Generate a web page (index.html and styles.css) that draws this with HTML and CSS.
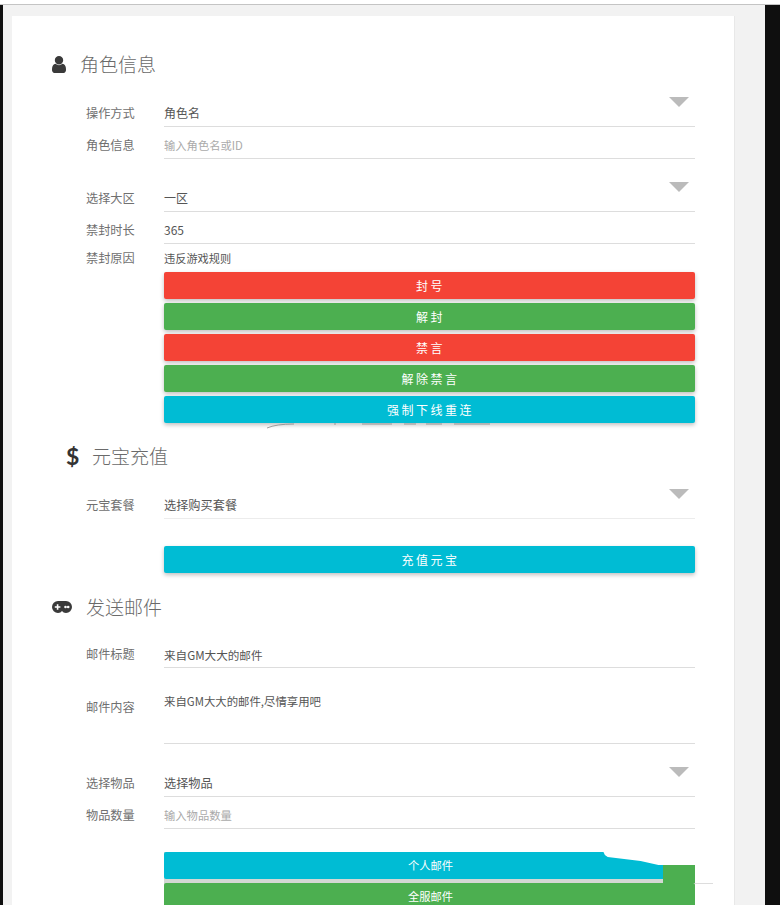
FILE: index.html
```html
<!DOCTYPE html>
<html lang="zh-CN">
<head>
<meta charset="utf-8">
<title>GM</title>
<link rel="stylesheet" href="styles.css">
</head>
<body>
<div class="frame">
  <div class="side side-left"></div>
  <main class="stage">
    <div class="card">
      <h2 class="heading heading-user">
        <svg class="icon-user" viewBox="256 128 1280 1536"><path d="M1536 1399q0 109-62.5 187t-150.5 78h-854q-88 0-150.5-78t-62.5-187q0-85 8.5-160.5t31.5-152 58.5-131 94-89 134.5-34.5q131 128 313 128t313-128q76 0 134.5 34.5t94 89 58.5 131 31.5 152 8.5 160.5zm-256-887q0 159-112.5 271.5t-271.5 112.5-271.5-112.5-112.5-271.5 112.5-271.5 271.5-112.5 271.5 112.5 112.5 271.5z" fill="#3a3a3a"/></svg>
        <span>角色信息</span>
      </h2>
      <div class="row"><label class="label">操作方式</label><div class="field select">角色名<i class="caret"></i></div></div>
      <div class="row"><label class="label">角色信息</label><div class="field hint">输入角色名或ID</div></div>
      <div class="row row-gap"><label class="label">选择大区</label><div class="field select">一区<i class="caret"></i></div></div>
      <div class="row"><label class="label">禁封时长</label><div class="field">365</div></div>
      <div class="row row-plain"><label class="label">禁封原因</label><div class="field narrow">违反游戏规则</div></div>
      <div class="actions">
        <button class="btn red">封号</button>
        <button class="btn green">解封</button>
        <button class="btn red">禁言</button>
        <button class="btn green">解除禁言</button>
        <button class="btn cyan">强制下线重连</button>
        <svg class="scratch" viewBox="0 0 340 6"><path d="M103 5Q112 1 130 1M170 1h2M198 1h30M240 1h12M262 1h16M290 1h36" fill="none" stroke="#888" stroke-width=".8"/></svg>
      </div>

      <h2 class="heading heading-money">
        <span class="dollar">$</span>
        <span>元宝充值</span>
      </h2>
      <div class="row row-tight"><label class="label">元宝套餐</label><div class="field select soft wide">选择购买套餐<i class="caret"></i></div></div>
      <div class="actions actions-solo">
        <button class="btn cyan">充值元宝</button>
      </div>

      <h2 class="heading heading-mail">
        <svg class="icon-pad" viewBox="0 0 20 12"><path d="M6 0h8a6 6 0 0 1 0 12c-2 0-3-1-4-2-1 1-2 2-4 2A6 6 0 0 1 6 0z" fill="#3a3a3a"/><path d="M4.800 3.200h1.600v2h2v1.600h-2v2H4.800v-2h-2V5.200h2z" fill="#fff"/><circle cx="13.500" cy="6" r="1.300" fill="#fff"/><circle cx="16.200" cy="6" r="1.300" fill="#fff"/></svg>
        <span>发送邮件</span>
      </h2>
      <div class="row row-tight"><label class="label">邮件标题</label><div class="field mail-title">来自GM大大的邮件</div></div>
      <div class="row row-area"><label class="label">邮件内容</label><div class="field area">来自GM大大的邮件,尽情享用吧</div></div>
      <div class="row row-gap"><label class="label">选择物品</label><div class="field select wide">选择物品<i class="caret"></i></div></div>
      <div class="row"><label class="label">物品数量</label><div class="field hint">输入物品数量</div></div>
      <div class="actions actions-mail">
        <button class="btn cyan btn-torn">个人邮件</button>
        <button class="btn green btn-small">全服邮件</button>
      </div>
    </div>
  </main>
  <div class="side side-right"></div>
</div>
</body>
</html>
```
FILE: styles.css
```css
* { box-sizing: border-box; }
html, body { margin: 0; padding: 0; background: #fff; }
body {
  height: 911px;
  overflow: hidden;
  font-family: "Noto Sans CJK SC", "Open Sans", sans-serif;
  font-size: 12px;
  color: #555;
  padding-top: 4px;
}
.frame {
  display: flex;
  height: 901px;
  overflow: hidden;
  border-top: 1px solid #c4c4c4;
  background: #f2f2f2;
}
.side { flex: none; background: #0f0f0f; }
.side-left { width: 3px; }
.side-right { width: 15px; }
.stage { flex: 1; min-width: 0; padding: 11px 30px 0 9px; overflow: hidden; }
.card {
  background: #fff;
  border-right: 1px solid #e8e8e8;
  padding: 33px 39px 0 74px;
  height: 960px;
}
.heading {
  display: flex;
  align-items: center;
  height: 30px;
  margin: 0 0 16px;
  font-size: 19px;
  font-weight: 300;
  color: #6a6a6a;
  line-height: 30px;
}
.heading-user { margin-left: -34px; }
.icon-user { width: 14px; height: 17px; margin-right: 15px; }
.heading-money { margin: 18px 0 16px -20px; }
.dollar {
  width: 11px;
  margin-right: 15px;
  font-family: "Lato", sans-serif;
  font-size: 23px;
  font-weight: 700;
  color: #333;
}
.heading-mail { margin: 19px 0 14px -34px; }
.icon-pad { width: 20px; height: 12px; margin-right: 15px; }
.heading-mail .icon-pad { margin-right: 14px; }
.heading-user .icon-user { margin-right: 14px; }
.row { display: flex; height: 32px; }
.row-gap { margin-top: 21px; }
.row-plain { height: 28px; }
.row-tight { height: 32px; }
.row-area { height: 76px; }
.label {
  flex: none;
  width: 78px;
  padding-top: 9px;
  line-height: 18px;
  font-size: 12.200px;
  color: #707070;
}
.row-plain .label { padding-top: 5px; }
.row-area .label { padding-top: 30px; }
.field {
  position: relative;
  flex: 1;
  padding-top: 9px;
  line-height: 18px;
  color: #555;
  border-bottom: 1px solid #ddd;
}
.row-plain .field { padding-top: 5px; border-bottom: 0; }
.narrow { font-size: 11.200px; }
.wide { font-size: 12.200px; }
.mail-title { font-size: 11.600px; padding-top: 10px; }
.field.area { padding-top: 24px; font-size: 11.400px; }
.field.soft { border-bottom-color: #ececec; }
.hint { color: #aaa; font-size: 11.300px; }
.caret {
  position: absolute;
  right: 6px;
  top: 2px;
  width: 0;
  height: 0;
  border-left: 10px solid transparent;
  border-right: 10px solid transparent;
  border-top: 10px solid #bbb;
}
.actions {
  position: relative;
  margin-left: 78px;
  display: flex;
  flex-direction: column;
  gap: 4px;
}
.actions-solo { margin-top: 27px; }
.actions-mail { margin-top: 23px; background: #d3d8d3; }
.actions-mail::after {
  content: "";
  position: absolute;
  left: 100%;
  top: 31px;
  width: 18px;
  height: 1px;
  background: #ddd;
}
.btn {
  display: block;
  width: 100%;
  height: 27px;
  padding: 0 0 0 2px;
  border: 0;
  border-radius: 2px;
  font-family: inherit;
  font-size: 12px;
  line-height: 27px;
  letter-spacing: 2.500px;
  color: #fff;
  box-shadow: 0 2px 4px rgba(0, 0, 0, .25);
}
.red { background: #f44336; }
.green { background: #4caf50; }
.cyan { background: #00bcd4; }
.scratch {
  position: absolute;
  left: 0;
  bottom: -6px;
  width: 340px;
  height: 6px;
}
.btn-torn { position: relative; letter-spacing: 0; font-size: 11.300px; box-shadow: none; }
.btn-small { letter-spacing: 0; font-size: 11.300px; box-shadow: none; }
.btn-torn::before {
  content: "";
  position: absolute;
  right: 0;
  top: 13px;
  width: 32px;
  height: 18px;
  background: #4caf50;
}
.btn-torn::after {
  content: "";
  position: absolute;
  right: -2px;
  top: -1px;
  width: 94px;
  height: 14px;
  background: #fff;
  clip-path: polygon(0 0, 100% 0, 100% 100%, 59% 100%, 40% 72%, 5% 42%, 2% 28%);
}
```
